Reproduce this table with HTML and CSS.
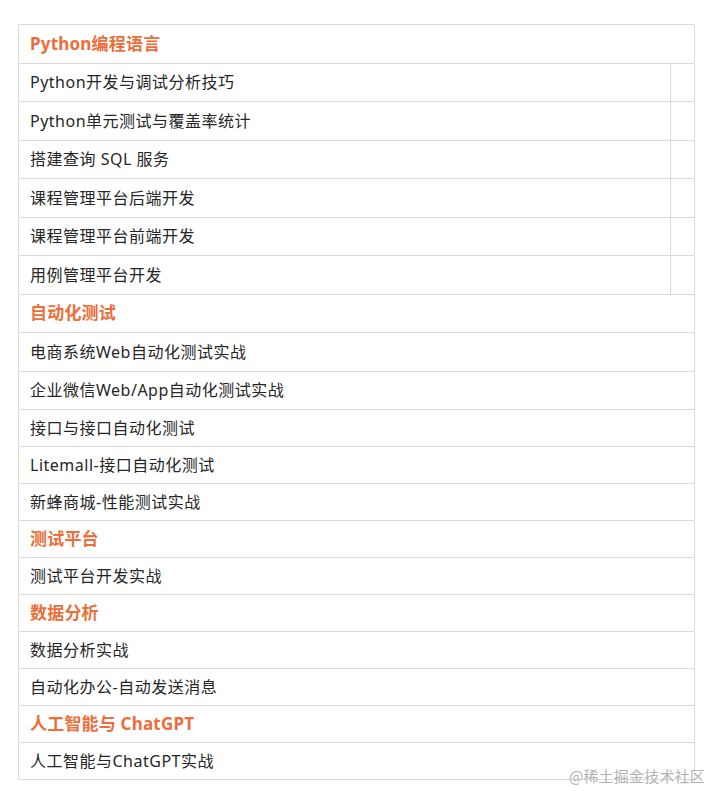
FILE: index.html
```html
<!DOCTYPE html>
<html lang="zh-CN">
<head>
<meta charset="utf-8">
<link rel="stylesheet" href="styles.css">
</head>
<body>
<div class="page">
  <table class="course-table">
    <colgroup><col class="col-main"><col class="col-side"></colgroup>
    <tbody>
      <tr class="tall"><th colspan="2">Python编程语言</th></tr>
      <tr class="tall"><td>Python开发与调试分析技巧</td><td></td></tr>
      <tr class="tall"><td>Python单元测试与覆盖率统计</td><td></td></tr>
      <tr class="tall"><td>搭建查询 SQL 服务</td><td></td></tr>
      <tr class="tall"><td>课程管理平台后端开发</td><td></td></tr>
      <tr class="tall"><td>课程管理平台前端开发</td><td></td></tr>
      <tr class="tall"><td>用例管理平台开发</td><td></td></tr>
      <tr class="tall"><th colspan="2">自动化测试</th></tr>
      <tr class="tall"><td colspan="2">电商系统Web自动化测试实战</td></tr>
      <tr class="tall"><td colspan="2">企业微信Web/App自动化测试实战</td></tr>
      <tr><td colspan="2">接口与接口自动化测试</td></tr>
      <tr><td colspan="2">Litemall-接口自动化测试</td></tr>
      <tr><td colspan="2">新蜂商城-性能测试实战</td></tr>
      <tr><th colspan="2">测试平台</th></tr>
      <tr><td colspan="2">测试平台开发实战</td></tr>
      <tr><th colspan="2">数据分析</th></tr>
      <tr><td colspan="2">数据分析实战</td></tr>
      <tr><td colspan="2">自动化办公-自动发送消息</td></tr>
      <tr><th colspan="2">人工智能与 ChatGPT</th></tr>
      <tr><td colspan="2">人工智能与ChatGPT实战</td></tr>
    </tbody>
  </table>
  <div class="watermark">@稀土掘金技术社区</div>
</div>
</body>
</html>
```

FILE: styles.css
```css
html, body {
  margin: 0;
  padding: 0;
  background: #ffffff;
}
.page {
  position: relative;
  width: 708px;
  height: 791px;
  padding: 24px 0 0 18px;
  box-sizing: border-box;
  font-family: "Noto Sans", "Noto Sans CJK SC", sans-serif;
}
.course-table {
  border-collapse: collapse;
  table-layout: fixed;
  width: 676px;
  border: 1px solid #dadada;
}
.col-main { width: 652px; }
.col-side { width: 24px; }
.course-table th,
.course-table td {
  border: 1px solid #dadada;
  padding: 0 10px 0 11px;
  height: 37px;
  box-sizing: border-box;
  text-align: left;
  vertical-align: middle;
  font-size: 16px;
  line-height: 20px;
  letter-spacing: 0.5px;
  white-space: nowrap;
}
.course-table tr.tall th,
.course-table tr.tall td {
  height: 38.5px;
}
.course-table td {
  color: #262626;
  font-weight: 400;
}
.course-table th {
  color: #ec6e3a;
  font-weight: 700;
  font-size: 17px;
  letter-spacing: 0.2px;
}
.watermark {
  position: absolute;
  left: 569px;
  top: 766px;
  font-size: 15px;
  line-height: 20px;
  color: #b3b3b3;
  font-family: "Noto Sans CJK SC", sans-serif;
  letter-spacing: 0.2px;
}
```
